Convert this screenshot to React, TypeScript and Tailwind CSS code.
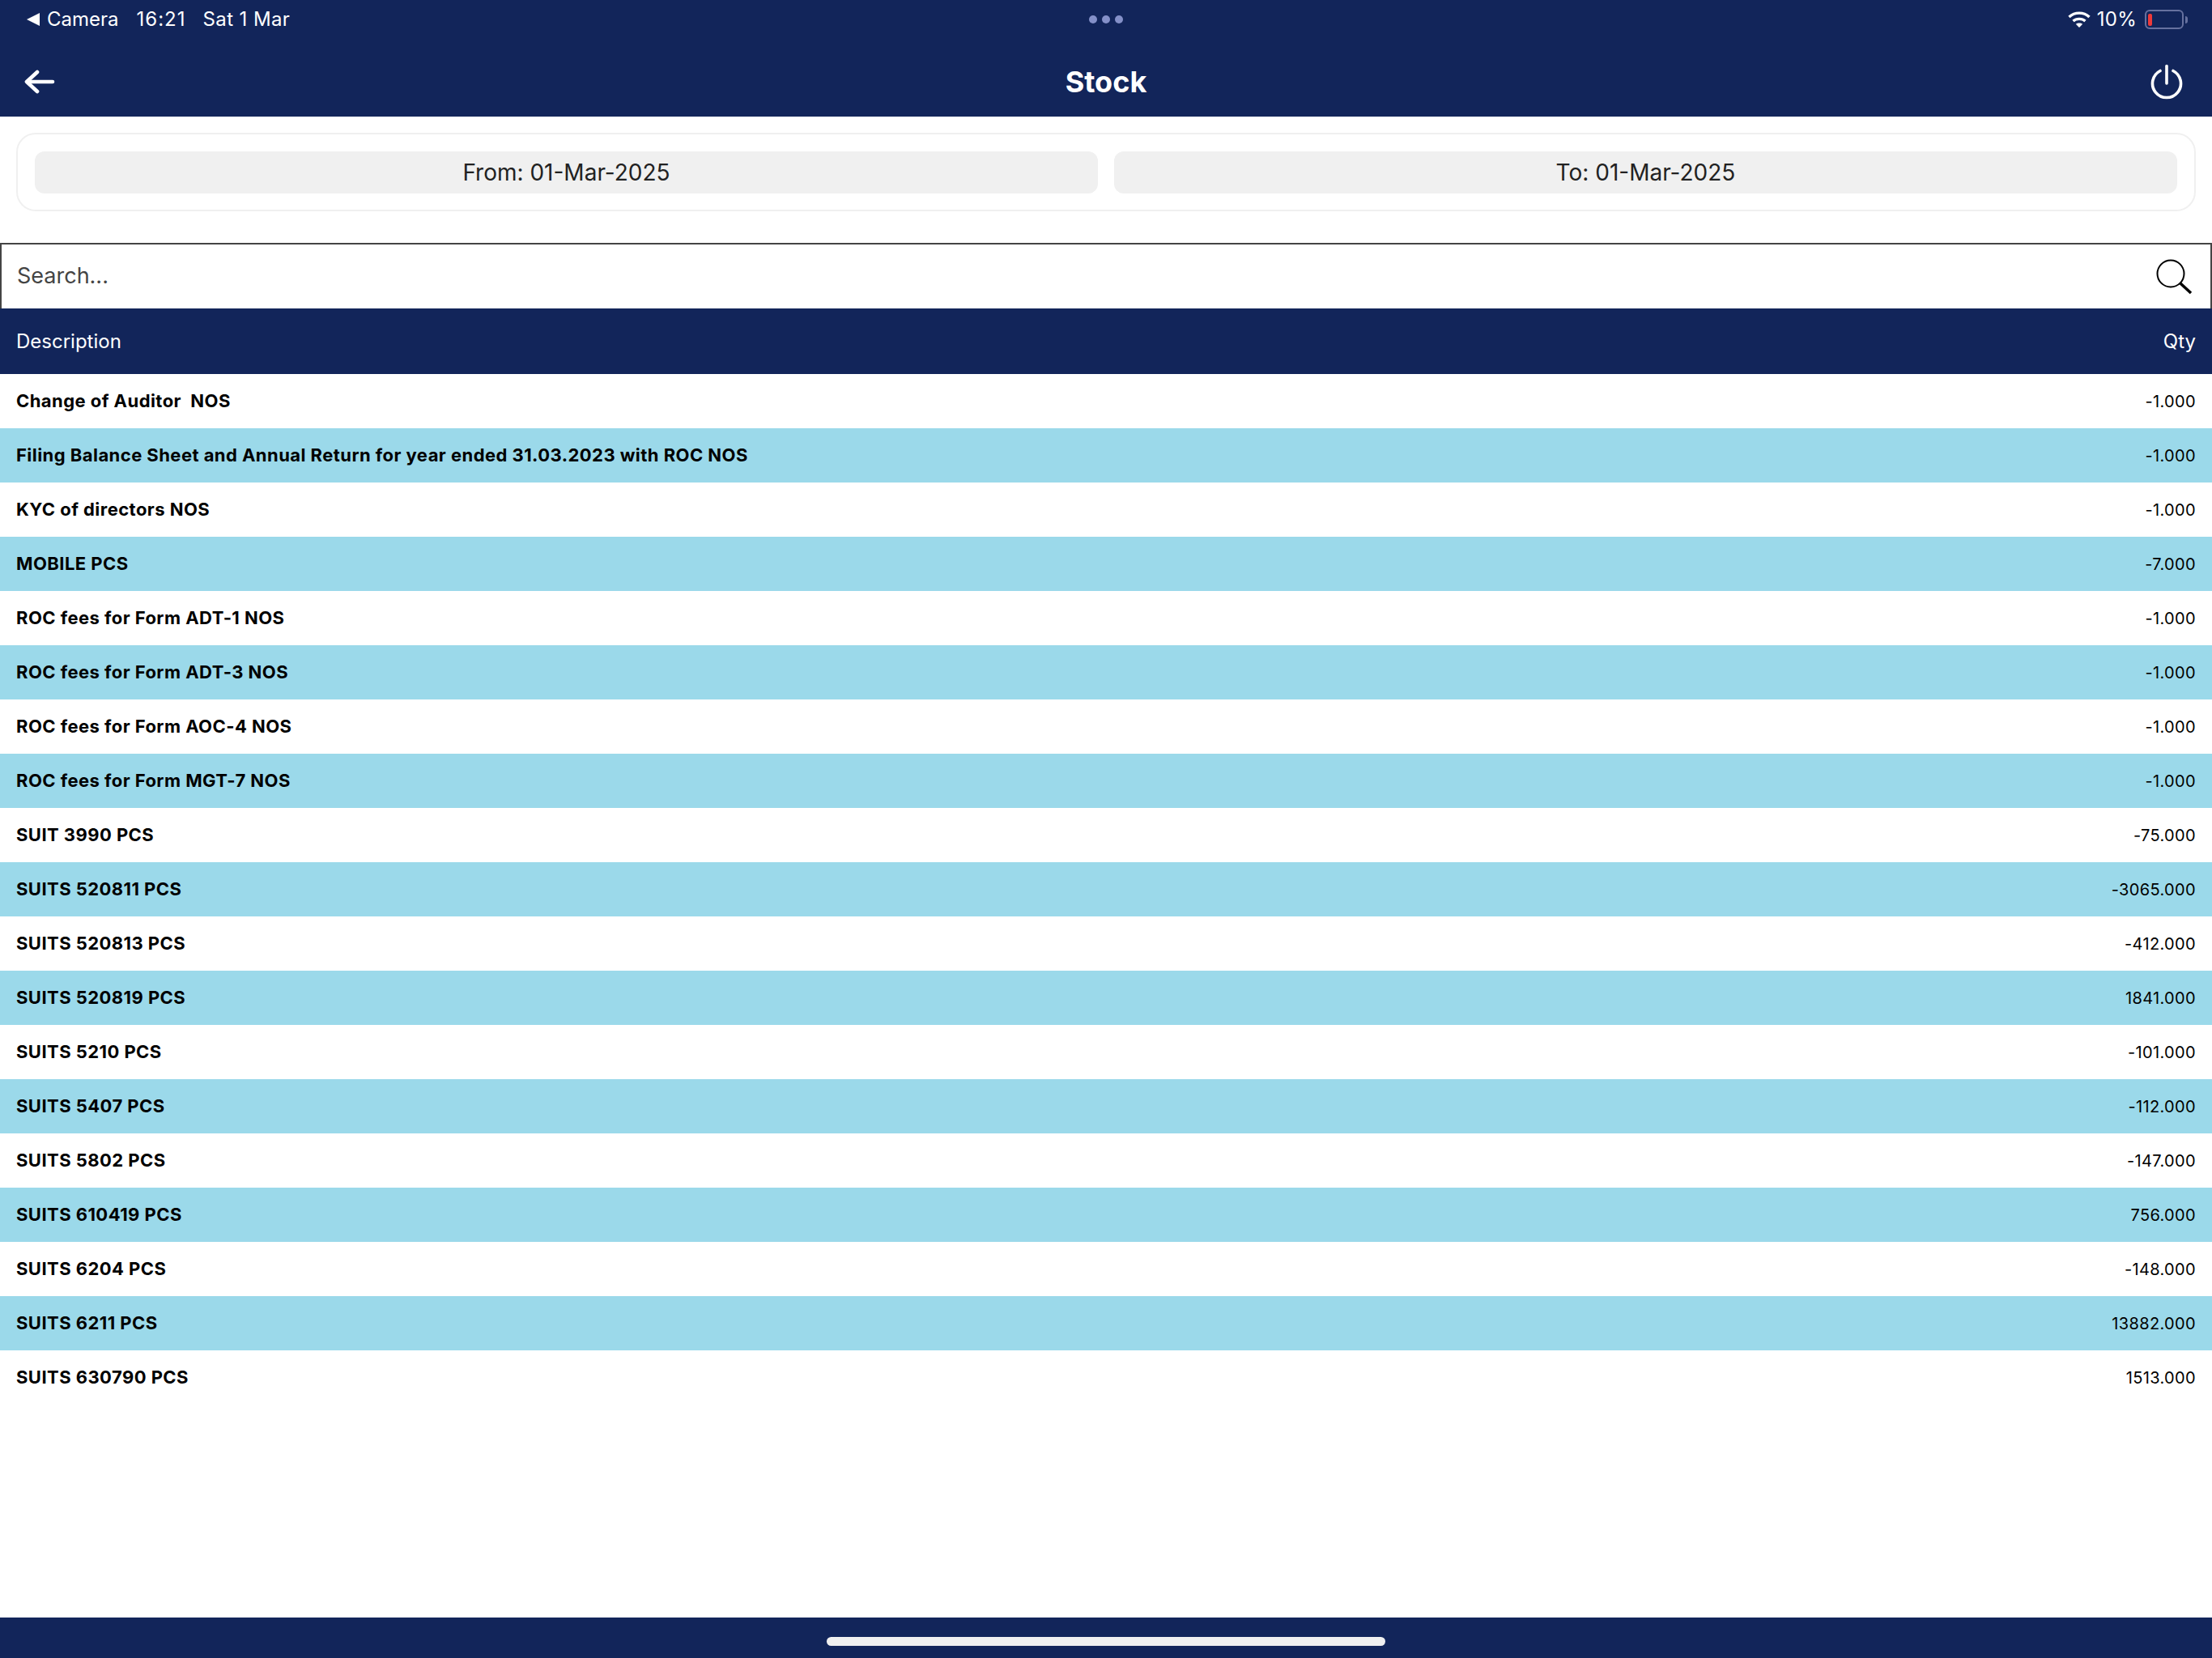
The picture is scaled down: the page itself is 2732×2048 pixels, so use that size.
const rows = [
  { name: "Change of Auditor  NOS", qty: "-1.000" },
  { name: "Filing Balance Sheet and Annual Return for year ended 31.03.2023 with ROC NOS", qty: "-1.000" },
  { name: "KYC of directors NOS", qty: "-1.000" },
  { name: "MOBILE PCS", qty: "-7.000" },
  { name: "ROC fees for Form ADT-1 NOS", qty: "-1.000" },
  { name: "ROC fees for Form ADT-3 NOS", qty: "-1.000" },
  { name: "ROC fees for Form AOC-4 NOS", qty: "-1.000" },
  { name: "ROC fees for Form MGT-7 NOS", qty: "-1.000" },
  { name: "SUIT 3990 PCS", qty: "-75.000" },
  { name: "SUITS 520811 PCS", qty: "-3065.000" },
  { name: "SUITS 520813 PCS", qty: "-412.000" },
  { name: "SUITS 520819 PCS", qty: "1841.000" },
  { name: "SUITS 5210 PCS", qty: "-101.000" },
  { name: "SUITS 5407 PCS", qty: "-112.000" },
  { name: "SUITS 5802 PCS", qty: "-147.000" },
  { name: "SUITS 610419 PCS", qty: "756.000" },
  { name: "SUITS 6204 PCS", qty: "-148.000" },
  { name: "SUITS 6211 PCS", qty: "13882.000" },
  { name: "SUITS 630790 PCS", qty: "1513.000" },
];

const StatusBar = () => {
  return (
    <div className="relative flex h-[48px] items-center justify-between pl-[33px] pr-[30px] text-[24px] text-white">
      <div className="flex items-center">
        <svg width="16" height="16" viewBox="0 0 16 16" className="mr-[9px]">
          <path d="M16 0V16L0 8Z" fill="#fff" />
        </svg>
        <span className="mr-[22px]">Camera</span>
        <span className="mr-[21px] tracking-[1px]">16:21</span>
        <span className="tracking-[0.4px]">Sat 1 Mar</span>
      </div>
      <div className="absolute left-[1345px] top-[19px] flex gap-[6px]">
        <div className="h-[10px] w-[10px] rounded-full bg-[#8490c8]" />
        <div className="h-[10px] w-[10px] rounded-full bg-[#8490c8]" />
        <div className="h-[10px] w-[10px] rounded-full bg-[#8490c8]" />
      </div>
      <div className="flex items-center">
        <svg width="28" height="22" viewBox="0 0 28 22" className="mr-[8px]" fill="none" stroke="#fff" strokeWidth="3.4">
          <path d="M1.5 8C8.5 1.5 19.5 1.5 26.5 8" />
          <path d="M6.5 13C10.5 9.5 17.5 9.5 21.5 13" />
          <path d="M14 21L9.8 16.8C12 15 16 15 18.2 16.8Z" fill="#fff" stroke="none" />
        </svg>
        <span className="mr-[10px] tracking-[0.3px]">10%</span>
        <div className="flex items-center">
          <div className="flex h-[24px] w-[48px] items-center rounded-[6px] border-2 border-[#66719f] pl-[2px]">
            <div className="h-[15px] w-[5px] rounded-[2px] bg-[#ee3a3a]" />
          </div>
          <div className="ml-[2px] h-[9px] w-[3px] rounded-r-full bg-[#66719f]" />
        </div>
      </div>
    </div>
  );
};

const App = () => {
  return (
    <div className="flex min-h-[2048px] flex-col bg-white font-['Inter','Liberation_Sans',sans-serif]">
      <div className="bg-[#12255a]">
        <StatusBar />
        <div className="relative flex h-[96px] items-center justify-between pl-[30px] pr-[36px] pt-[10px] text-white">
          <svg width="38" height="30" viewBox="0 0 38 30" fill="none" stroke="#fff" strokeWidth="4.6" strokeLinecap="round" strokeLinejoin="round">
            <path d="M35 15H4" />
            <path d="M16 3L3 15L16 27" />
          </svg>
          <div className="absolute inset-x-0 text-center text-[36px] font-bold">Stock</div>
          <svg width="40" height="44" viewBox="0 0 40 44" fill="none" stroke="#fff" strokeWidth="3.6" strokeLinecap="round">
            <path d="M12 8.5A17.5 17.5 0 1 0 28 8.5" />
            <path d="M20 2.5V24" />
          </svg>
        </div>
      </div>

      <div className="mx-[20px] mt-[20px] flex gap-[20px] rounded-[24px] border-2 border-[#f0f0f0] px-[21px] pb-[20px] pt-[21px]">
        <div className="flex h-[52px] flex-1 items-center justify-center rounded-[12px] bg-[#f0f0f0] text-[28px] text-[#222]">
          From: 01-Mar-2025
        </div>
        <div className="flex h-[52px] flex-1 items-center justify-center rounded-[12px] bg-[#f0f0f0] text-[28px] text-[#222]">
          To: 01-Mar-2025
        </div>
      </div>

      <div className="mt-[39px] flex h-[81px] items-center border-x-2 border-t-2 border-[#444] pl-[19px] pr-[22px]">
        <input
          type="text"
          placeholder="Search..."
          className="min-w-0 flex-1 bg-transparent text-[27px] outline-none placeholder:text-[#444]"
        />
        <svg width="46" height="46" viewBox="0 0 46 46" fill="none" stroke="#000">
          <circle cx="19" cy="19" r="16.5" strokeWidth="2" />
          <path d="M31 31L44 43" strokeWidth="3.5" />
        </svg>
      </div>

      <div className="flex h-[81px] items-center justify-between bg-[#12255a] px-[20px] text-[24px] text-white">
        <span>Description</span>
        <span>Qty</span>
      </div>

      <div className="flex-1">
        {rows.map((row, i) => (
          <div
            key={row.name}
            className={
              i % 2 === 1
                ? "flex h-[67px] items-center justify-between bg-[#9bd9ea] px-[20px] text-black"
                : "flex h-[67px] items-center justify-between bg-white px-[20px] text-black"
            }
          >
            <span className="whitespace-pre text-[22px] font-bold tracking-[0.45px]">{row.name}</span>
            <span className="text-[20px] tracking-[0.35px]">{row.qty}</span>
          </div>
        ))}
      </div>

      <div className="flex h-[50px] justify-center bg-[#12255a] pt-[24px]">
        <div className="h-[11px] w-[690px] rounded-full bg-[#f0f0f0]" />
      </div>
    </div>
  );
};

export default App;
